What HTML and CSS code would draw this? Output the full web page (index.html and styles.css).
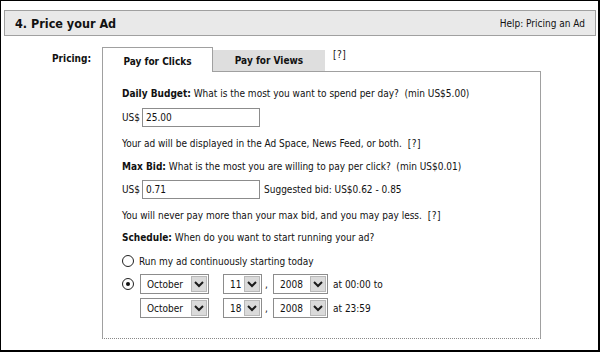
FILE: index.html
```html
<!DOCTYPE html>
<html>
<head>
<meta charset="utf-8">
<link rel="stylesheet" href="styles.css">
</head>
<body>
<div class="frame">
  <div class="header">
    <span class="title">4. Price your Ad</span>
    <span class="help">Help: Pricing an Ad</span>
  </div>
  <div class="pricing">
    <div class="label">Pricing:</div>
    <div class="main">
      <div class="tabs">
        <div class="tab active">Pay for Clicks</div>
        <div class="tab inactive">Pay for Views</div>
        <div class="tabhelp">[?]</div>
      </div>
      <div class="panel">
        <div class="line l1"><b>Daily Budget:</b> What is the most you want to spend per day?&nbsp; (min US$5.00)</div>
        <div class="inrow r1"><span>US$</span><span class="input">25.00</span></div>
        <div class="line l2">Your ad will be displayed in the Ad Space, News Feed, or both.&nbsp; <span class="q">[?]</span></div>
        <div class="line l3"><b>Max Bid:</b> What is the most you are willing to pay per click?&nbsp; (min US$0.01)</div>
        <div class="inrow r2"><span>US$</span><span class="input">0.71</span><span class="sugg">Suggested bid: US$0.62 - 0.85</span></div>
        <div class="line l4">You will never pay more than your max bid, and you may pay less.&nbsp; <span class="q">[?]</span></div>
        <div class="line l5"><b>Schedule:</b> When do you want to start running your ad?</div>
        <div class="radiorow rr1"><span class="radio"></span><span>Run my ad continuously starting today</span></div>
        <div class="daterow d1">
          <span class="radio on"></span>
          <span class="sel w-month"><span class="val">October</span><svg class="arr" width="16" height="16" viewBox="0 0 16 16"><rect x="0.5" y="0.5" width="15" height="15" fill="#dadada" stroke="#b8b8b8"/><path d="M4 6 L8 10 L12 6" fill="none" stroke="#1a1a1a" stroke-width="2"/></svg></span>
          <span class="sel w-day"><span class="val">11</span><svg class="arr" width="16" height="16" viewBox="0 0 16 16"><rect x="0.5" y="0.5" width="15" height="15" fill="#dadada" stroke="#b8b8b8"/><path d="M4 6 L8 10 L12 6" fill="none" stroke="#1a1a1a" stroke-width="2"/></svg></span>
          <span class="comma">,</span>
          <span class="sel w-year"><span class="val">2008</span><svg class="arr" width="16" height="16" viewBox="0 0 16 16"><rect x="0.5" y="0.5" width="15" height="15" fill="#dadada" stroke="#b8b8b8"/><path d="M4 6 L8 10 L12 6" fill="none" stroke="#1a1a1a" stroke-width="2"/></svg></span>
          <span class="at">at 00:00 to</span>
        </div>
        <div class="daterow d2">
          <span class="radio blank"></span>
          <span class="sel w-month"><span class="val">October</span><svg class="arr" width="16" height="16" viewBox="0 0 16 16"><rect x="0.5" y="0.5" width="15" height="15" fill="#dadada" stroke="#b8b8b8"/><path d="M4 6 L8 10 L12 6" fill="none" stroke="#1a1a1a" stroke-width="2"/></svg></span>
          <span class="sel w-day"><span class="val">18</span><svg class="arr" width="16" height="16" viewBox="0 0 16 16"><rect x="0.5" y="0.5" width="15" height="15" fill="#dadada" stroke="#b8b8b8"/><path d="M4 6 L8 10 L12 6" fill="none" stroke="#1a1a1a" stroke-width="2"/></svg></span>
          <span class="comma">,</span>
          <span class="sel w-year"><span class="val">2008</span><svg class="arr" width="16" height="16" viewBox="0 0 16 16"><rect x="0.5" y="0.5" width="15" height="15" fill="#dadada" stroke="#b8b8b8"/><path d="M4 6 L8 10 L12 6" fill="none" stroke="#1a1a1a" stroke-width="2"/></svg></span>
          <span class="at">at 23:59</span>
        </div>
      </div>
    </div>
  </div>
</div>
</body>
</html>
```
FILE: styles.css
```css
* { box-sizing: border-box; }
html, body { margin: 0; padding: 0; background: #fff; }
body {
  font-family: "DejaVu Sans Condensed", "DejaVu Sans", sans-serif;
  font-stretch: condensed;
  font-size: 10px;
  color: #111;
}
.frame {
  width: 600px;
  height: 352px;
  border: 1px solid #000;
  border-right-width: 2px;
  border-bottom-width: 2px;
  padding: 9px 2px 0 3px;
  overflow: hidden;
}
.header {
  height: 26px;
  border: 1px solid #a0a0a0;
  background: #e9e9e9;
  display: flex;
  align-items: center;
  justify-content: space-between;
  padding: 0 10px 0 10px;
}
.title { font-weight: bold; font-size: 12.5px; }
.help { font-size: 10px; }
.pricing {
  display: flex;
  margin-top: 11px;
}
.label {
  width: 87px;
  text-align: right;
  font-weight: bold;
  padding-top: 6px;
  margin-right: 11px;
}
.main { display: flex; flex-direction: column; }
.tabs {
  display: flex;
  align-items: flex-end;
  height: 25px;
  position: relative;
  z-index: 1;
}
.tab {
  font-weight: bold;
  display: flex;
  align-items: center;
  justify-content: center;
}
.tab.active {
  width: 111px;
  height: 25px;
  background: #fff;
  border: 1px solid #a0a0a0;
  border-bottom: none;
  padding-top: 2px;
}
.tab.inactive {
  width: 112px;
  height: 22px;
  background: #dedede;
  border-bottom: 1px solid #a0a0a0;
}
.tabhelp {
  align-self: flex-start;
  margin-left: 8px;
  margin-top: 2px;
  font-size: 10px;
  letter-spacing: 0.5px;
}
.panel {
  width: 439px;
  height: 268px;
  margin-top: -1px;
  border: 1px solid #a0a0a0;
  border-bottom: 1px dotted #888;
  padding: 15px 0 0 19px;
  display: flex;
  flex-direction: column;
}
.line { line-height: 14px; white-space: nowrap; }
.q { font-size: 10px; letter-spacing: 0.5px; }
.inrow { display: flex; align-items: center; height: 19px; white-space: nowrap; }
.input {
  width: 118px;
  height: 19px;
  border: 1px solid #8c8c8c;
  margin-left: 2px;
  padding-left: 3px;
  display: flex;
  align-items: center;
}
.sugg { margin-left: 4px; }
.r1 { margin-top: 7px; }
.l2 { margin-top: 10px; }
.l3 { margin-top: 9px; }
.r2 { margin-top: 6px; }
.l4 { margin-top: 10px; }
.l5 { margin-top: 8px; }
.radiorow { display: flex; align-items: center; height: 14px; margin-top: 9px; }
.radio {
  width: 12px;
  height: 12px;
  border: 1px solid #222;
  border-radius: 50%;
  margin-right: 5px;
  position: relative;
  flex: none;
}
.radio.on::after {
  content: "";
  position: absolute;
  left: 3px;
  top: 3px;
  width: 4px;
  height: 4px;
  border-radius: 50%;
  background: #111;
}
.radio.blank { border-color: transparent; }
.daterow { display: flex; align-items: center; height: 20px; }
.d1 { margin-top: 6px; }
.d2 { margin-top: 4px; }
.daterow .radio { margin-right: 6px; }
.sel {
  height: 20px;
  border: 1px solid #8c8c8c;
  display: flex;
  align-items: center;
  justify-content: space-between;
  padding: 0 1px 0 6px;
  background: #fff;
  flex: none;
}
.w-month { width: 69px; }
.w-day { width: 39px; margin-left: 14px; padding-left: 6px; }
.w-year { width: 55px; }
.comma { width: 11px; padding-left: 3px; }
.at { margin-left: 5px; }
.arr { display: block; }
```
